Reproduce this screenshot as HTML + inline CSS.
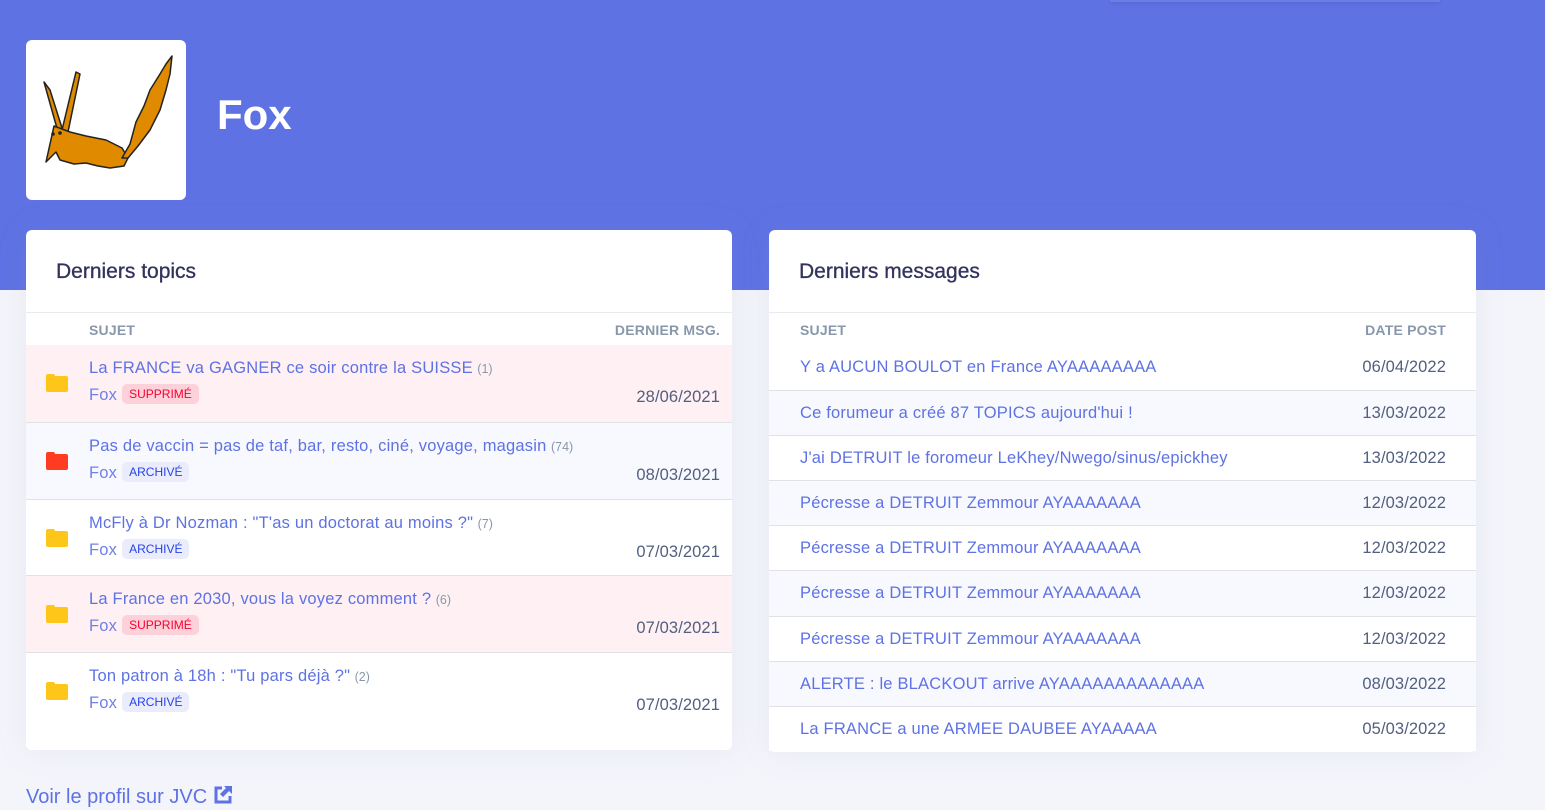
<!DOCTYPE html>
<html><head><meta charset="utf-8"><style>
*{box-sizing:border-box;margin:0;padding:0}
body{width:1545px;height:810px;overflow:hidden;background:#f4f5fb;font-family:"Liberation Sans",sans-serif;position:relative}
.hdr{position:absolute;left:0;top:0;width:1545px;height:290px;background:#5e72e4}
.logo{position:absolute;left:26px;top:40px;width:160px;height:160px;background:#fff;border-radius:6px}
.name{position:absolute;left:217px;top:91px;color:#fff;font-size:42px;font-weight:bold}
.card{position:absolute;top:230px;background:#fff;border-radius:6px;overflow:hidden;box-shadow:0 0 2rem rgba(136,152,170,.12)}
.ct{position:absolute;left:30px;top:30px;font-size:21px;color:#32325d;-webkit-text-stroke:.3px #32325d}
.th{position:absolute;top:82px;height:33px;border-top:1px solid #e9ecef;width:100%;font-size:14px;color:#8898aa;font-weight:bold;letter-spacing:.2px}
.th span{position:absolute;top:9px}
.row{position:absolute;left:0;width:100%;border-top:1px solid #e2e2e6}
.a{color:#5e72e4;font-size:16.5px;white-space:nowrap;letter-spacing:.2px}
.c{color:#8898aa;font-size:12.5px}
.d{position:absolute;color:#525f7f;font-size:16.5px;letter-spacing:.1px}
.bd{display:inline-block;font-size:12px;padding:3px 7px;border-radius:5px;margin-left:5px;vertical-align:2px}
.sp{background:#fdd1da;color:#f80031}.ar{background:#eaecfb;color:#2643e9}
.fd{position:absolute;left:20px;width:22px;height:16px;border-radius:2px}
.fd:before{content:"";position:absolute;left:0;top:-2px;width:9px;height:4px;border-radius:2px 2px 0 0;background:inherit}
.t{position:absolute;left:63px;top:14px}
</style></head><body>
<div class="hdr"></div>
<div style="position:absolute;left:1110px;top:0;width:330px;height:2px;background:#6b7de6;box-shadow:0 1px 3px rgba(0,0,0,.15)"></div>
<div class="logo"><svg width="160" height="160" viewBox="0 0 160 160">
<g stroke="#222" stroke-width="1.5" fill="#e08a00" stroke-linejoin="round">
<path d="M18 42 L32 92 L36 88 L24 50 Z"/><path d="M36 90 L50 32 L54 34 L42 92 Z"/>
<path d="M28 86 L20 122 L30 112 L34 120 L48 124 L60 123 L72 126 L84 128 L98 126 L102 118 L96 108 L80 100 L60 96 L44 92 Z"/>
<path d="M96 118 L104 104 L110 82 L118 66 L124 50 L134 34 L140 24 L146 16 L144 34 L140 50 L134 70 L124 90 L112 106 L102 118 Z"/>
</g><circle cx="27" cy="94" r="1.8" fill="#222"/><circle cx="34" cy="93" r="1.8" fill="#222"/></svg></div>
<div class="name">Fox</div>

<div class="card" style="left:26px;width:706px;height:520px">
<div class="ct">Derniers topics</div>
<div class="th"><span style="left:63px">SUJET</span><span style="right:12px">DERNIER MSG.</span></div>
<div class="row" style="top:115px;height:77px;background:#fff0f3;border-top:none"><div class="fd" style="top:31px;background:#ffc61a"></div><div class="t"><span class="a">La FRANCE va GAGNER ce soir contre la SUISSE</span> <span class="c">(1)</span><div style="margin-top:6px"><span class="a" style="color:#6f80e8">Fox</span><span class="bd sp">SUPPRIMÉ</span></div></div><div class="d" style="right:12px;top:43px">28/06/2021</div></div>
<div class="row" style="top:192px;height:77px;background:#f8f9fe"><div class="fd" style="top:31px;background:#ff3b22"></div><div class="t"><span class="a">Pas de vaccin = pas de taf, bar, resto, ciné, voyage, magasin</span> <span class="c">(74)</span><div style="margin-top:6px"><span class="a" style="color:#6f80e8">Fox</span><span class="bd ar">ARCHIVÉ</span></div></div><div class="d" style="right:12px;top:43px">08/03/2021</div></div>
<div class="row" style="top:269px;height:76px;background:#fff"><div class="fd" style="top:31px;background:#ffc61a"></div><div class="t"><span class="a">McFly à Dr Nozman : "T'as un doctorat au moins ?"</span> <span class="c">(7)</span><div style="margin-top:6px"><span class="a" style="color:#6f80e8">Fox</span><span class="bd ar">ARCHIVÉ</span></div></div><div class="d" style="right:12px;top:43px">07/03/2021</div></div>
<div class="row" style="top:345px;height:77px;background:#fff0f3"><div class="fd" style="top:31px;background:#ffc61a"></div><div class="t"><span class="a">La France en 2030, vous la voyez comment ?</span> <span class="c">(6)</span><div style="margin-top:6px"><span class="a" style="color:#6f80e8">Fox</span><span class="bd sp">SUPPRIMÉ</span></div></div><div class="d" style="right:12px;top:43px">07/03/2021</div></div>
<div class="row" style="top:422px;height:98px;background:#fff"><div class="fd" style="top:31px;background:#ffc61a"></div><div class="t"><span class="a">Ton patron à 18h : "Tu pars déjà ?"</span> <span class="c">(2)</span><div style="margin-top:6px"><span class="a" style="color:#6f80e8">Fox</span><span class="bd ar">ARCHIVÉ</span></div></div><div class="d" style="right:12px;top:43px">07/03/2021</div></div>
</div>

<div class="card" style="left:769px;width:707px;height:522px">
<div class="ct">Derniers messages</div>
<div class="th"><span style="left:31px">SUJET</span><span style="right:30px">DATE POST</span></div>
</div>
<div style="position:absolute;left:769px;top:345px;width:707px">
<div class="row" style="top:0;height:45px;border-top:none;background:#fff"><span class="a" style="position:absolute;left:31px;top:13px">Y a AUCUN BOULOT en France AYAAAAAAAA</span><span class="d" style="right:30px;top:13px">06/04/2022</span></div>
<div class="row" style="top:45px;height:45px;background:#f8f9fe"><span class="a" style="position:absolute;left:31px;top:13px">Ce forumeur a créé 87 TOPICS aujourd'hui !</span><span class="d" style="right:30px;top:13px">13/03/2022</span></div>
<div class="row" style="top:90px;height:45px;background:#fff"><span class="a" style="position:absolute;left:31px;top:13px">J'ai DETRUIT le foromeur LeKhey/Nwego/sinus/epickhey</span><span class="d" style="right:30px;top:13px">13/03/2022</span></div>
<div class="row" style="top:135px;height:45px;background:#f8f9fe"><span class="a" style="position:absolute;left:31px;top:13px">Pécresse a DETRUIT Zemmour AYAAAAAAA</span><span class="d" style="right:30px;top:13px">12/03/2022</span></div>
<div class="row" style="top:180px;height:45px;background:#fff"><span class="a" style="position:absolute;left:31px;top:13px">Pécresse a DETRUIT Zemmour AYAAAAAAA</span><span class="d" style="right:30px;top:13px">12/03/2022</span></div>
<div class="row" style="top:225px;height:46px;background:#f8f9fe"><span class="a" style="position:absolute;left:31px;top:13px">Pécresse a DETRUIT Zemmour AYAAAAAAA</span><span class="d" style="right:30px;top:13px">12/03/2022</span></div>
<div class="row" style="top:271px;height:45px;background:#fff"><span class="a" style="position:absolute;left:31px;top:13px">Pécresse a DETRUIT Zemmour AYAAAAAAA</span><span class="d" style="right:30px;top:13px">12/03/2022</span></div>
<div class="row" style="top:316px;height:45px;background:#f8f9fe"><span class="a" style="position:absolute;left:31px;top:13px">ALERTE : le BLACKOUT arrive AYAAAAAAAAAAAAA</span><span class="d" style="right:30px;top:13px">08/03/2022</span></div>
<div class="row" style="top:361px;height:45px;background:#fff"><span class="a" style="position:absolute;left:31px;top:13px">La FRANCE a une ARMEE DAUBEE AYAAAAA</span><span class="d" style="right:30px;top:13px">05/03/2022</span></div>
</div>

<div style="position:absolute;left:26px;top:785px;font-size:20px;color:#5e72e4">Voir le profil sur JVC <svg width="20" height="20" viewBox="0 0 20 20" style="vertical-align:-2px"><path d="M9 3H3v14h14v-6" fill="none" stroke="#5e72e4" stroke-width="3"/><path d="M11 1h8v8l-3-3-6 6-3-3 6-6z" fill="#5e72e4"/></svg></div>
</body></html>
